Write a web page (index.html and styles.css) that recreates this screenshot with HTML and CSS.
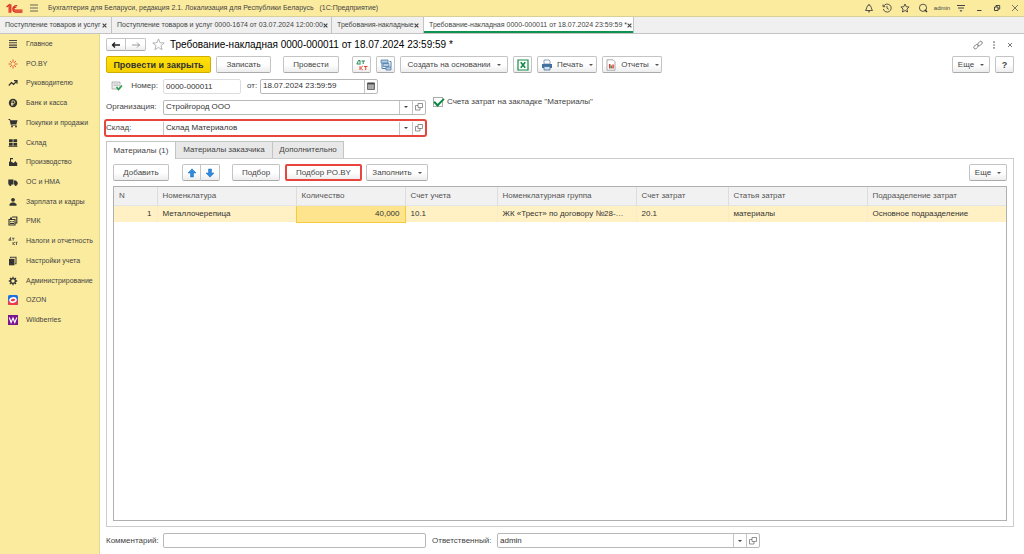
FILE: index.html
```html
<!DOCTYPE html>
<html lang="ru">
<head>
<meta charset="utf-8">
<title>Требование-накладная 0000-000011</title>
<link rel="stylesheet" href="styles.css">
</head>
<body>
<svg width="0" height="0" class="defs" aria-hidden="true">
  <symbol id="open" viewBox="0 0 10 10"><path d="M4 1.500h4.500v4H4zM4 3.500H1.500v4.500H6V5.500" fill="none" stroke="#777" stroke-width=".8"/></symbol>
  <symbol id="x" viewBox="0 0 8 8"><path d="M1 1l6 6M7 1L1 7" fill="none" stroke="currentColor" stroke-width="1.800"/></symbol>
</svg>
<header class="titlebar">
  <svg class="logo" viewBox="0 0 16 10"><g fill="none" stroke="#d8281e" stroke-width="1.200"><path d="M.5 3.500L3 1.500V9M4.500 9V1"/><path d="M10.500 2.500A3 3 0 1 0 8.500 8.300H15.500"/><path d="M9.600 4A1.400 1.400 0 1 0 8.500 6.500H15.500"/></g></svg>
  <button class="ib menu" aria-label="Меню"><svg viewBox="0 0 10 10"><path d="M1 2h8M1 5h8M1 8h8" stroke="#555" stroke-width=".9"/></svg></button>
  <span class="apptitle">Бухгалтерия для Беларуси, редакция 2.1. Локализация для Республики Беларусь &nbsp; (1С:Предприятие)</span>
  <nav class="tools">
    <button class="ib" aria-label="Уведомления"><svg viewBox="0 0 10 10"><path d="M1.500 7.500C3 6 2.500 2 5 2s2 4 3.500 5.500zM4 8.800h2M5 1v1" fill="none" stroke="#444" stroke-width=".9"/></svg></button>
    <button class="ib" aria-label="История"><svg viewBox="0 0 10 10"><path d="M1.500 3.500A4 4 0 1 1 1.300 6M1 1.500v2.200h2.200M5 3v2.300l1.800 1" fill="none" stroke="#444" stroke-width=".9"/></svg></button>
    <button class="ib" aria-label="Избранное"><svg viewBox="0 0 10 10"><path d="M5 1l1.200 2.700 2.900.3-2.200 2 .7 3L5 7.500 2.400 9l.7-3-2.200-2 2.900-.3z" fill="none" stroke="#444" stroke-width=".9"/></svg></button>
    <button class="ib" aria-label="Поиск"><svg viewBox="0 0 10 10"><circle cx="5" cy="4.800" r="3.600" fill="none" stroke="#444" stroke-width=".9"/><path d="M6.800 6.800L9 9" stroke="#333" stroke-width="1.500"/></svg></button>
    <button class="user">admin</button>
    <button class="ib" aria-label="Настройки"><svg viewBox="0 0 10 10"><path d="M1 2.500h8M2 5h6" stroke="#444"/><path d="M3.500 7.200h3L5 9z" fill="#444"/></svg></button>
    <button class="ib" aria-label="Свернуть"><svg viewBox="0 0 10 10"><path d="M3 7.500h4.500" stroke="#444"/></svg></button>
    <button class="ib" aria-label="Восстановить"><svg viewBox="0 0 10 10"><path d="M2.500 4h3.500v3.500H2.500zM4 4V2.500h3.700V6H6" fill="none" stroke="#444"/></svg></button>
    <button class="ib" aria-label="Закрыть"><svg viewBox="0 0 10 10"><path d="M2 2l6 6M8 2L2 8" stroke="#555" stroke-width=".8"/></svg></button>
  </nav>
</header>
<nav class="windows">
  <a href="#" class="win w1">Поступление товаров и услуг<svg><use href="#x"/></svg></a>
  <a href="#" class="win w2">Поступление товаров и услуг 0000-1674 от 03.07.2024 12:00:00<svg><use href="#x"/></svg></a>
  <a href="#" class="win w3">Требования-накладные<svg><use href="#x"/></svg></a>
  <a href="#" class="win active">Требование-накладная 0000-000011 от 18.07.2024 23:59:59 *<svg><use href="#x"/></svg></a>
</nav>
<div class="work">
  <nav class="sections"><div class="list">
    <a href="#"><svg viewBox="0 0 10 10"><path d="M1 1.500h8M1 3.800h8M1 6.100h8M1 8.400h8" stroke="#444" stroke-width="1.100"/></svg>Главное</a>
    <a href="#"><svg viewBox="0 0 10 10"><path d="M5 .5v3M5 6.500v3M.5 5h3M6.500 5h3M2 2l1.800 1.800M8 2L6.200 3.800M2 8l1.800-1.800M8 8L6.200 6.200" stroke="#df4a2c" stroke-width=".9"/></svg>PO.BY</a>
    <a href="#"><svg viewBox="0 0 10 10"><path d="M.8 7.500l2.700-3 2 1.800L8.800 3M6 2.700h3v3" fill="none" stroke="#333" stroke-width="1.200"/></svg>Руководителю</a>
    <a href="#"><svg viewBox="0 0 10 10"><circle cx="5" cy="5" r="4.200" fill="#333"/><path d="M4 8V2.800h1.500a1.300 1.300 0 0 1 0 2.700H3M3 6.700h2.500" fill="none" stroke="#f9eb9c" stroke-width=".8"/></svg>Банк и касса</a>
    <a href="#"><svg viewBox="0 0 10 10"><path d="M.5 1.500H2L3.300 7H8.500" fill="none" stroke="#333"/><path d="M2.200 2.200h7.300L8.500 6H3z" fill="#333"/><circle cx="4" cy="8.500" r=".9" fill="#333"/><circle cx="8" cy="8.500" r=".9" fill="#333"/></svg>Покупки и продажи</a>
    <a href="#"><svg viewBox="0 0 10 10"><path d="M1 1.300h3.700v3H1zM5.400 1.300h3.700v3H5.400zM1 5h3.700v2.700H1zM5.400 5h3.700v2.700H5.400zM.5 8.300h9v.8h-9z" fill="#333"/></svg>Склад</a>
    <a href="#"><svg viewBox="0 0 10 10"><path d="M1 9V5l1-.7V2h1v2.500L5.500 6 8 4v1.500h1.200V9zM2 1h3v1.200H2z" fill="#333"/></svg>Производство</a>
    <a href="#"><svg viewBox="0 0 10 10"><path d="M.3 2.500h5.200v5H.3zM6 3.500h2l1.700 2v2H6z" fill="#333"/><circle cx="2.300" cy="7.800" r="1.200" fill="#333"/><circle cx="7.700" cy="7.800" r="1.200" fill="#333"/></svg>ОС и НМА</a>
    <a href="#"><svg viewBox="0 0 10 10"><circle cx="5" cy="2.800" r="1.900" fill="#333"/><path d="M1.500 8.800V7L3.700 5.500h2.600L8.500 7v1.800z" fill="#333"/></svg>Зарплата и кадры</a>
    <a href="#"><svg viewBox="0 0 10 10"><path d="M1 3.500h6V9H1zM4 1h4.800v6H7.500" fill="none" stroke="#333" stroke-width="1.100"/><path d="M2.200 5h1.300v1.200H2.200zM4.500 5h1.300v1.200H4.500zM2 7h4v1H2zM2 1.500h2v2H2z" fill="#333"/></svg>РМК</a>
    <a href="#"><svg viewBox="0 0 10 10"><path d="M.8 4L2.500 1.500V4M.5 4.300h3M4 2.200h2.500M5.200 2.200v2.500M5 6v3M7 6L5.300 7.500 7 9M7.500 6.300h2M8.500 6.300V9" fill="none" stroke="#444" stroke-width=".8"/></svg>Налоги и отчетность</a>
    <a href="#"><svg viewBox="0 0 10 10"><path d="M1 2.800h5.500V9.300H1z" fill="#333"/><path d="M2.500 2V1.200H8v6.500H7" fill="none" stroke="#444" stroke-width="1.100"/></svg>Настройки учета</a>
    <a href="#"><svg viewBox="0 0 10 10"><circle cx="5" cy="5" r="2.400" fill="none" stroke="#333" stroke-width="1.300"/><path d="M5 .8v1.500M5 7.700v1.500M.8 5h1.500M7.700 5h1.500M2 2l1.100 1.100M8 2L6.900 3.100M2 8l1.100-1.100M8 8L6.900 6.900" stroke="#333" stroke-width="1.300"/></svg>Администрирование</a>
    <a href="#"><svg viewBox="0 0 10 10"><rect width="10" height="10" rx="1.500" fill="#1f6fe0"/><path d="M0 5Q2 9 8 7L10 4v4.500Q10 10 8.500 10h-7Q0 10 0 8.500z" fill="#ef3b4a"/><ellipse cx="5" cy="5" rx="3.800" ry="2.900" fill="#fff" transform="rotate(-15 5 5)"/><ellipse cx="5" cy="5" rx="2.300" ry="1.200" fill="#ef3b4a" transform="rotate(-15 5 5)"/></svg>OZON</a>
    <a href="#"><svg viewBox="0 0 10 10"><path d="M0 0h10v10H0z" fill="#7b168e"/><path d="M1.300 2.500l1.800 5L5 3l1.800 4.500 2-5" fill="none" stroke="#fff" stroke-width="1.100"/></svg>Wildberries</a>
  </div></nav>
  <main class="doc">
    <div class="head">
      <div class="pair"><button class="btn" aria-label="Назад"><svg viewBox="0 0 10 10"><path d="M1 5h8M4 2.500L1.500 5 4 7.500" fill="none" stroke="#222" stroke-width="1.400"/></svg></button><button class="btn" aria-label="Вперед"><svg viewBox="0 0 10 10"><path d="M1 5h8M6 2.500L8.500 5 6 7.500" fill="none" stroke="#999"/></svg></button></div>
      <button class="ib star" aria-label="В избранное"><svg viewBox="0 0 12 12"><path d="M6 .8l1.400 3.600 3.900.2-3 2.400 1 3.800L6 8.700l-3.300 2.100 1-3.800-3-2.400 3.900-.2z" fill="none" stroke="#aaa" stroke-width=".8"/></svg></button>
      <h1>Требование-накладная 0000-000011 от 18.07.2024 23:59:59 *</h1>
      <div class="headtools">
        <button class="ib" aria-label="Ссылка"><svg viewBox="0 0 10 10"><g fill="none" stroke="#777" stroke-width=".9"><rect x="4.500" y="2" width="5" height="3" rx="1.500" transform="rotate(-45 7 3.500)"/><rect x=".5" y="5.200" width="5" height="3" rx="1.500" transform="rotate(-45 3 6.700)"/></g></svg></button>
        <button class="ib" aria-label="Действия"><svg viewBox="0 0 10 10"><path d="M4.300 1.300h1.400v1.600H4.300zM4.300 4.200h1.400v1.600H4.300zM4.300 7.100h1.400v1.600H4.300z" fill="#777"/></svg></button>
        <button class="ib" aria-label="Закрыть форму"><svg viewBox="0 0 10 10"><path d="M3 3l4 4M7 3L3 7" stroke="#777"/></svg></button>
      </div>
    </div>
    <div class="commands">
      <button class="btn primary">Провести и закрыть</button>
      <button class="btn b2">Записать</button>
      <button class="btn b3">Провести</button>
      <button class="btn sq first" aria-label="Дт Кт"><svg viewBox="0 0 12 12"><g fill="none" stroke-width="1"><path d="M1 5L2.500 1.500H4V4.500M.7 5h4M5.500 2H9M7.200 2v3" stroke="#218a52"/><path d="M4 7v4M6.800 7L4.500 9l2.300 2M8 7.500h3.500M9.700 7.500V11" stroke="#e04a35"/></g></svg></button>
      <button class="btn sq" aria-label="Структура подчиненности"><svg viewBox="0 0 12 12"><path d="M1 1h7v3H1zM3 4.500h6v3H3zM6 8h5v3H6z" fill="#b5cde2" stroke="#4f7dab" stroke-width=".8"/><path d="M2 4v5.500h4M9.500 2.500H11V8" fill="none" stroke="#4f7dab"/></svg></button>
      <button class="btn b4 dd">Создать на основании</button>
      <button class="btn sq" aria-label="Excel"><svg viewBox="0 0 12 12"><path d="M1 1h10v10H1z" fill="#fff" stroke="#188a49" stroke-width="1.200"/><path d="M3.800 3.200l4.400 5.600M8.200 3.200L3.800 8.800" stroke="#188a49" stroke-width="1.700"/></svg></button>
      <button class="btn b5 dd"><svg viewBox="0 0 12 12"><path d="M3 1h5l1 1v3H3z" fill="#fff" stroke="#6b8eb0" stroke-width=".8"/><path d="M1 5h10v4H1z" fill="#41719f"/><path d="M3 7.500h6V11H3z" fill="#d5e2ee" stroke="#41719f" stroke-width=".8"/></svg>Печать</button>
      <button class="btn b6 dd"><svg viewBox="0 0 12 12"><path d="M2 .8h6l2 2v8.400H2z" fill="#fff" stroke="#888" stroke-width=".7"/><path d="M4 5h1.500v4.500H4z" fill="#e33"/><path d="M5.700 6.500h1.500v3H5.700z" fill="#2b9b55"/><path d="M7.400 5.500h1.400v4H7.400z" fill="#e33"/></svg>Отчеты</button>
      <button class="btn more dd">Еще</button>
      <button class="btn help">?</button>
    </div>
    <form class="fields">
      <div class="row">
        <label for="num" class="numlabel"><svg viewBox="0 0 12 10"><path d="M1 1h8v7H1z" fill="#eee" stroke="#999" stroke-width=".7"/><path d="M2.500 3h5M2.500 4.500h5" stroke="#aaa" stroke-width=".6"/><path d="M5.500 6l2 2.500L11 4.500" fill="none" stroke="#27a04c" stroke-width="1.600"/></svg>Номер:</label>
        <input id="num" class="num" value="0000-000011">
        <label for="date" class="from">от:</label>
        <div class="combo datebox"><input id="date" value="18.07.2024 23:59:59"><button type="button" aria-label="Календарь"><svg viewBox="0 0 10 10"><path d="M1.500 2h7v6.500h-7z" fill="#999" stroke="#555" stroke-width=".8"/><path d="M1.500 2.500h7" stroke="#444" stroke-width="1.500"/><path d="M2.500 5h5M2.500 7h5" stroke="#eee" stroke-width=".7" stroke-dasharray="1 .8"/></svg></button></div>
      </div>
      <div class="row">
        <label for="org" class="lab">Организация:</label>
        <div class="combo wide"><input id="org" value="Стройгород ООО"><button type="button" class="arr" aria-label="Выбрать"></button><button type="button" aria-label="Открыть"><svg><use href="#open"/></svg></button></div>
        <label class="check"><input type="checkbox" checked>Счета затрат на закладке "Материалы"</label>
      </div>
      <div class="row marked">
        <label for="wh" class="lab">Склад:</label>
        <div class="combo wide"><input id="wh" value="Склад Материалов"><button type="button" class="arr" aria-label="Выбрать"></button><button type="button" aria-label="Открыть"><svg><use href="#open"/></svg></button></div>
      </div>
    </form>
    <div class="tabs" role="tablist">
      <button role="tab" class="tab on" aria-selected="true">Материалы (1)</button><button role="tab" class="tab t2">Материалы заказчика</button><button role="tab" class="tab t3">Дополнительно</button>
    </div>
    <section class="panel">
      <div class="bar">
        <button class="btn p1">Добавить</button>
        <div class="pair arrows"><button class="btn" aria-label="Вверх"><svg viewBox="0 0 10 10"><path d="M5 .8L9 5H6.500v4h-3V5H1z" fill="#2e8be0" stroke="#1b68b5" stroke-width=".5"/></svg></button><button class="btn" aria-label="Вниз"><svg viewBox="0 0 10 10"><path d="M5 9.200L9 5H6.500V1h-3v4H1z" fill="#2e8be0" stroke="#1b68b5" stroke-width=".5"/></svg></button></div>
        <button class="btn p2">Подбор</button>
        <button class="btn p3">Подбор PO.BY</button>
        <button class="btn p4 dd">Заполнить</button>
        <button class="btn more dd">Еще</button>
      </div>
      <div class="grid">
        <table>
          <colgroup><col class="c1"><col class="c2"><col class="c3"><col class="c4"><col class="c2"><col class="c4"><col class="c2"><col class="c2"></colgroup>
          <thead><tr><th>N</th><th>Номенклатура</th><th>Количество</th><th>Счет учета</th><th>Номенклатурная группа</th><th>Счет затрат</th><th>Статья затрат</th><th>Подразделение затрат</th></tr></thead>
          <tbody><tr><td class="r">1</td><td>Металлочерепица</td><td class="r cur">40,000</td><td>10.1</td><td>ЖК «Трест» по договору №28-…</td><td>20.1</td><td>материалы</td><td>Основное подразделение</td></tr></tbody>
        </table>
      </div>
    </section>
    <footer class="foot">
      <label for="com" class="lab">Комментарий:</label>
      <input id="com" class="comment">
      <label for="resp" class="resplab">Ответственный:</label>
      <div class="combo wide"><input id="resp" value="admin"><button type="button" class="arr" aria-label="Выбрать"></button><button type="button" aria-label="Открыть"><svg><use href="#open"/></svg></button></div>
    </footer>
  </main>
</div>
</body>
</html>
```
FILE: styles.css
```css
* { box-sizing: border-box; }
body {
  margin: 0;
  min-height: 100vh;
  display: flex;
  flex-direction: column;
  font: 8px/12px "Liberation Sans", Arial, sans-serif;
  color: #444;
  background: #fff;
}
.defs { position: absolute; }
button, input { font: inherit; color: inherit; margin: 0; padding: 0; min-width: 0; }
a { color: inherit; text-decoration: none; }
svg { flex: none; display: block; width: 10px; height: 10px; }
.ib { border: 0; background: none; display: flex; align-items: center; justify-content: center; width: 18px; height: 14px; }

.titlebar { display: flex; align-items: center; height: 17px; padding: 0 0 0 6px; background: #fbeb9e; border-bottom: 1px solid #d9cf98; font-size: 7px; }
.titlebar .logo { width: 17px; height: 11px; }
.menu { margin-left: 2px; }
.apptitle { margin-left: 5px; white-space: nowrap; }
.tools { margin-left: auto; display: flex; align-items: center; }
.user { border: 0; background: none; font-size: 6px; width: 20px; }

.windows { display: flex; height: 17px; background: #f0f0f0; border-bottom: 1px solid #c4c4c4; font-size: 7px; }
.win { display: flex; align-items: center; justify-content: space-between; white-space: nowrap; padding: 0 4px 0 5px; border-right: 1px solid #c4c4c4; }
.win svg { width: 5px; height: 5px; color: #444; }
.w1 { width: 112px; }
.w2 { width: 220px; }
.w3 { width: 92px; }
.win.active { width: 210px; background: #fff; box-shadow: inset 0 -2px #0f9150; }

.work { flex: 1; display: flex; }
.sections { width: 100px; background: #fbeb9e; border-right: 1px solid #e4d98f; font-size: 7px; }
.list { height: 296px; display: flex; flex-direction: column; }
.sections a { flex: 1; display: flex; align-items: center; padding-left: 8px; gap: 8px; white-space: nowrap; }

.doc { flex: 1; min-width: 0; display: flex; flex-direction: column; padding: 3px 10px 6px 6px; }
.head { display: flex; align-items: center; height: 15px; }
.btn { display: flex; align-items: center; justify-content: center; gap: 4px; height: 17px; border: 1px solid #c4c4c4; border-bottom-color: #aaa; border-radius: 2px; background: linear-gradient(#fff 50%, #ededed); white-space: nowrap; }
.pair { display: flex; }
.pair .btn { width: 20px; height: 13px; }
.pair .btn + .btn { border-left: 0; border-radius: 0 2px 2px 0; }
.pair .btn:first-child { border-radius: 2px 0 0 2px; }
.star { width: 24px; }
.star svg { width: 13px; height: 13px; }
h1 { margin: 0; font-size: 10px; font-weight: 400; color: #000; white-space: nowrap; }
.headtools { margin-left: auto; margin-right: -4px; display: flex; }
.headtools .ib { width: 16px; }

.commands { display: flex; margin-top: 4px; gap: 5px; }
.primary { width: 105px; background: linear-gradient(#ffe10c, #f5d000); border-color: #cfae00; font-size: 9px; font-weight: 700; color: #333; }
.b2 { width: 55px; }
.b3 { width: 56px; margin-left: 7px; }
.sq { width: 19px; }
.sq.first { margin-left: 8px; }
.sq svg, .dd svg { width: 12px; height: 12px; }
.dd::after { content: ""; border: solid transparent; border-width: 2px 2px 0; border-top-color: #555; margin-left: 2px; }
.b4 { width: 108px; }
.b5, .b6 { width: 60px; }
.more { width: 38px; margin-left: auto; }
.help { width: 19px; font-size: 9px; font-weight: 700; }

.fields { display: flex; flex-direction: column; gap: 3px; margin-top: 4px; }
.row { display: flex; align-items: center; height: 18px; }
.lab, .numlabel { width: 57px; flex: none; white-space: nowrap; }
.numlabel { display: flex; align-items: center; justify-content: space-between; padding: 0 5px; }
.numlabel svg { width: 12px; }
.num, .comment { height: 15px; border: 1px solid #b8b8b8; border-radius: 2px; padding: 0 2px; background: #fff; outline: 0; }
.num { width: 78px; border-color: #ddd; color: #333; }
.from { width: 19px; padding-left: 6px; }
.combo { display: flex; height: 15px; border: 1px solid #b8b8b8; border-radius: 2px; background: #fff; }
.combo input { flex: 1; border: 0; padding: 0 2px; background: none; color: #333; outline: 0; }
.combo button { width: 13px; border: 0; border-left: 1px solid #c4c4c4; background: none; display: flex; align-items: center; justify-content: center; }
.arr::before { content: ""; border: solid transparent; border-width: 2px 2px 0; border-top-color: #444; }
.datebox { width: 118px; }
.wide { width: 263px; }
.check { display: flex; align-items: center; gap: 4px; margin: 0 0 10px 7px; white-space: nowrap; }
.check input { appearance: none; width: 10px; height: 10px; border: 1px solid #aaa; background: #fff; display: grid; place-items: center; }
.check input::before { content: ""; width: 8px; height: 4px; border: solid #0c8a43; border-width: 0 0 2px 2px; rotate: -45deg; translate: 0 -1px; }
.marked { width: 323px; margin-left: -2px; padding-left: 2px; outline: 2px solid #e8453c; outline-offset: -2px; border-radius: 3px; }
.marked .combo { border-color: transparent #c4c4c4; }

.tabs { display: flex; margin-top: 4px; position: relative; }
.tab { height: 17px; border: 1px solid #c4c4c4; border-left: 0; border-bottom: 0; background: #e8e8e8; }
.tab.on { width: 70px; height: 18px; margin-bottom: -1px; background: #fff; border-left: 1px solid #c4c4c4; }
.t2 { width: 97px; }
.t3 { width: 71px; }
.panel { flex: 1; display: flex; flex-direction: column; border: 1px solid #ccc; padding: 5px 6px; }
.bar { display: flex; align-items: center; height: 17px; }
.p1 { width: 56px; }
.arrows { margin: 0 12px 0 13px; }
.arrows .btn { width: 19px; height: 17px; }
.p2 { width: 48px; }
.p3 { width: 77px; margin: 0 4px 0 5px; border: 2px solid #e8453c; }
.p4 { width: 62px; }
.grid { flex: 1; margin-top: 5px; border: 1px solid #b0b0b0; }
table { width: 100%; border-collapse: collapse; table-layout: fixed; }
th, td { height: 17px; padding: 0 5px; text-align: left; font-weight: 400; white-space: nowrap; overflow: hidden; border-left: 1px solid #ddd; }
th:first-child, td:first-child { border-left: 0; }
th { height: 18px; background: #f1f1f1; border-bottom: 1px solid #e4e4e4; color: #555; }
td { background: #fff1c4; color: #333; border-left-color: #f6eccb; }
.r { text-align: right; }
.cur { background: #ffe48e; border: 1px solid #f5cb3c; }
.c1 { width: 43px; }
.c2 { width: 139px; }
.c3 { width: 109px; }
.c4 { width: 92px; }

.foot { display: flex; align-items: center; margin-top: 6px; }
.comment { width: 263px; }
.resplab { width: 71px; padding-left: 6px; white-space: nowrap; }
```
